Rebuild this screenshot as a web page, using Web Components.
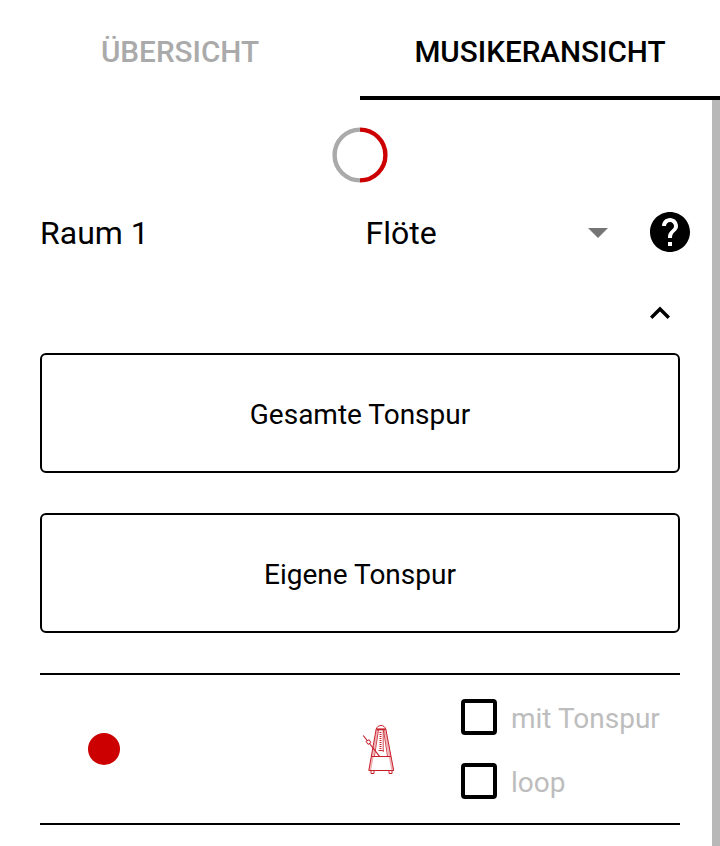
<!DOCTYPE html>
<html lang="de">
<head>
<meta charset="utf-8">
<title>Musikeransicht</title>
<style>
html,body{margin:0;background:#fff}
body{width:720px;height:846px;overflow:hidden;font-family:Roboto,sans-serif;color:#000}
</style>
</head>
<body>
<music-app></music-app>
<script>
function define(name, html) {
  const template = document.createElement('template');
  template.innerHTML = html;
  customElements.define(name, class extends HTMLElement {
    constructor() {
      super();
      this.attachShadow({ mode: 'open' }).appendChild(template.content.cloneNode(true));
    }
  });
}

define('tab-item', `<style>
:host{display:flex;box-sizing:border-box;height:100px;align-items:center;justify-content:center;
border-bottom:4px solid transparent;padding-top:7px;font-size:29.7px;font-weight:500;line-height:36px;color:#aaa;white-space:nowrap}
:host([active]){color:#000;border-color:#000}
</style><span><slot></slot></span>`);

define('tab-bar', `<style>:host{display:grid;grid-template-columns:1fr 1fr;height:100px}</style><slot></slot>`);

define('sync-ring', `<style>:host{display:flex;justify-content:center;height:56px}svg{display:block}</style>
<svg width="56" height="56" viewBox="0 0 56 56" fill="none" stroke-width="4.4">
<path d="M28 2.6a25.4 25.4 0 0 0 0 50.8" stroke="#aaa"/><path d="M28 2.6a25.4 25.4 0 0 1 0 50.8" stroke="#c00"/></svg>`);

define('room-row', `<style>
:host{display:grid;grid-template-columns:325.5px 1fr 20px 42px 40px;align-items:center;height:40px;margin-top:28px;font-size:32px;line-height:40px}
svg{display:block}span{padding-top:2px;white-space:nowrap}
.help{grid-column:5}.arrow{margin-top:2px}
</style><span><slot name="room"></slot></span><span><slot name="part"></slot></span>
<svg class="arrow" width="20" height="10" viewBox="0 0 20 10"><path d="M0 0h20L10 10z" fill="#757575"/></svg>
<svg class="help" width="40" height="40" viewBox="2 2 20 20"><path d="M12 2C6.48 2 2 6.48 2 12s4.48 10 10 10 10-4.48 10-10S17.52 2 12 2zm1 17h-2v-2h2v2zm2.07-7.75l-.9.92C13.45 12.9 13 13.5 13 15h-2v-.5c0-1.1.45-2.1 1.17-2.83l1.24-1.26c.37-.36.59-.86.59-1.41 0-1.1-.9-2-2-2s-2 .9-2 2H8c0-2.21 1.79-4 4-4s4 1.79 4 4c0 .88-.36 1.68-.93 2.25z"/></svg>`);

define('collapse-toggle', `<style>:host{display:flex;justify-content:flex-end;box-sizing:border-box;padding:50px 20px 0 0;height:102px}svg{display:block}</style>
<svg width="20" height="22" viewBox="0 0 20 22"><path d="M1.2 16.8 10 8 18.8 16.8" fill="none" stroke="#000" stroke-width="3.4"/></svg>`);

define('track-button', `<style>
:host{display:flex;box-sizing:border-box;height:120px;margin-bottom:40px;border:2px solid #000;border-radius:6px;
align-items:center;justify-content:center;font-size:28px;line-height:36px;padding-top:3px}
</style><span><slot></slot></span>`);

define('record-bar', `<style>
:host{display:grid;box-sizing:border-box;height:152px;border-top:2px solid #000;border-bottom:2px solid #000;
grid-template-columns:128px 1fr 98px 220px;align-items:center}
.dot{width:32px;height:32px;border-radius:50%;background:#c00;justify-self:center}
.metro{grid-column:3}
.checks{display:grid;gap:28px}
</style><div class="dot"></div>
<metronome-icon class="metro"></metronome-icon>
<div class="checks"><slot></slot></div>`);

define('metronome-icon', `<style>:host{display:block}svg{display:block}</style>
<svg width="34" height="50" viewBox="0 0 34 50" fill="none" stroke="#c8202b" stroke-width="1">
<path d="M15.5 5 8 46M22.5 5 30.5 46" stroke="#f0b4b8" stroke-width="2.4"/>
<path d="M14.2 5.5C14.8.2 23.2.2 23.8 5.5M14.2 5 6.8 46.5M23.8 5 31.7 46.5"/>
<path d="M16.5 6 12.5 32M21.5 6 25.5 32" stroke-width=".8"/>
<path d="M9.3 32.5h19.6M6.8 46.5h25M9 47v2.5h3V47M27 47v2.5h3V47"/>
<path d="M15 5.4h8" stroke-width="2"/>
<path d="M21.2 7v21M16.5 26.5h5" stroke-width=".8"/>
<path d="M18.5 8v19" stroke-width="2" stroke-dasharray="1 1"/>
<path d="M1.2 11.5 5.2 16.5M7.5 19.5 17.5 32.3" stroke-width="1.2"/><path d="m4 17.3 3.2-1.5 1.8 2.8-3 1.8z"/>
</svg>`);

define('check-option', `<style>
:host{display:flex;align-items:center;gap:14px;height:36px;font-size:28px;line-height:36px;color:#bdbdbd;white-space:nowrap}
i{box-sizing:border-box;width:36px;height:36px;border:4px solid #000;border-radius:4px;margin-left:1px}
span{padding-top:3px}
</style><i></i><span><slot></slot></span>`);

define('music-app', `<style>
:host{display:flex;flex-direction:column;height:846px}
.body{display:flex;flex:1}
main{flex:1;padding:27px 22px 0 40px}
.tracks,record-bar,sync-ring{margin-right:10px}
.bar{width:8px;background:#b8b8b8}
</style>
<tab-bar><tab-item>ÜBERSICHT</tab-item><tab-item active>MUSIKERANSICHT</tab-item></tab-bar>
<div class="body"><main>
<sync-ring></sync-ring>
<room-row><span slot="room">Raum 1</span><span slot="part">Flöte</span></room-row>
<collapse-toggle></collapse-toggle>
<div class="tracks"><track-button>Gesamte Tonspur</track-button><track-button>Eigene Tonspur</track-button></div>
<record-bar><check-option>mit Tonspur</check-option><check-option>loop</check-option></record-bar>
</main><div class="bar"></div></div>`);
</script>
</body>
</html>
